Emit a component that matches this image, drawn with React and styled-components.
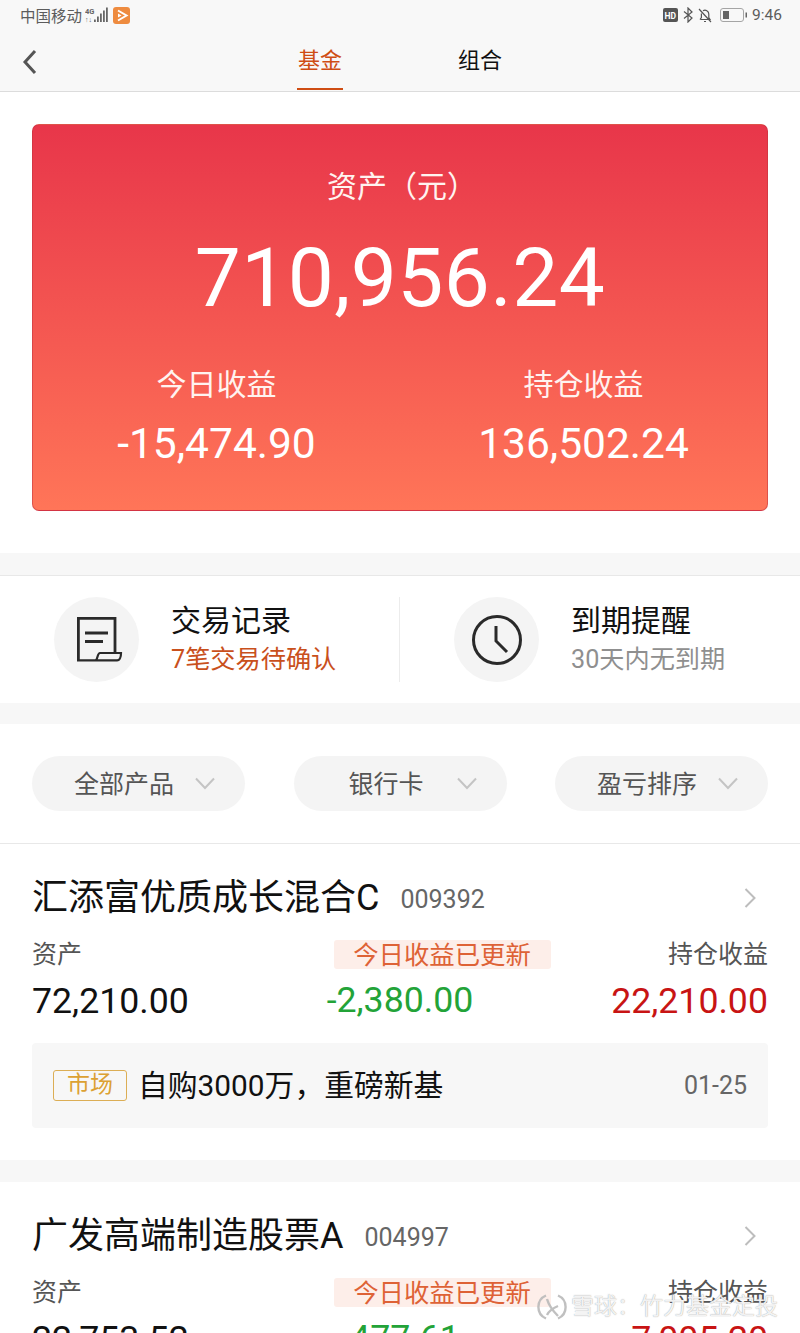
import React from "react";
import styled, { createGlobalStyle } from "styled-components";

const Global = createGlobalStyle`
  html, body { margin: 0; padding: 0; background: #fff; }
  body { font-family: Roboto, "Noto Sans CJK SC", sans-serif; height: 1333px; overflow: hidden; }
  * { box-sizing: border-box; }
`;

const Page = styled.div`
  position: relative;
  width: 800px;
  height: 1333px;
  overflow: hidden;
  background: #fff;
`;
const StatusBar = styled.div`
  height: 32px;
  background: #f8f8f8;
  padding: 0 18px 2px 20px;
  display: flex;
  align-items: center;
  justify-content: space-between;
  color: #5c5c5c;
  font-size: 15.5px;
`;
const StatusGroup = styled.div`
  display: flex;
  align-items: center;
  gap: ${(p) => p.$gap || 3}px;
`;
const Nav = styled.div`
  height: 60px;
  background: #f8f8f8;
  border-bottom: 1px solid #dcdcdc;
  position: relative;
  display: flex;
  justify-content: center;
  gap: 114px;
`;
const Back = styled.svg`
  position: absolute;
  left: 22px;
  top: 17px;
`;
const Tab = styled.div`
  height: 58px;
  width: 46px;
  display: flex;
  justify-content: center;
  padding-top: 11px;
  font-size: 22px;
  line-height: 36px;
  white-space: nowrap;
  color: ${(p) => (p.$active ? "#cf4d14" : "#111")};
  border-bottom: ${(p) => (p.$active ? "2px solid #cf4d14" : "none")};
`;
const HeroWrap = styled.div`
  padding: 32px 32px 42px;
`;
const Hero = styled.div`
  height: 387px;
  border-radius: 7px;
  border: 1px solid rgba(190, 50, 60, 0.5);
  background: linear-gradient(180deg, #e8364a 0%, #ff7558 100%);
  color: #fff;
  display: flex;
  flex-direction: column;
  align-items: center;
  padding-top: 42px;
`;
const HeroLabel = styled.div`
  font-size: 30px;
  line-height: 40px;
  margin-left: 4px;
  color: #fff3f0;
`;
const HeroValue = styled.div`
  font-size: 82px;
  line-height: 96px;
  margin-top: 23px;
  letter-spacing: 0.4px;
`;
const HeroStats = styled.div`
  width: 100%;
  display: grid;
  grid-template-columns: 367px 367px;
  margin-top: 39px;
`;
const HeroStat = styled.div`
  display: flex;
  flex-direction: column;
  align-items: center;
`;
const HeroStatLabel = styled.div`
  font-size: 30px;
  line-height: 40px;
  color: #fff3f0;
`;
const HeroStatValue = styled.div`
  font-size: 42.5px;
  line-height: 50px;
  margin-top: 14px;
`;
const Band = styled.div`
  height: ${(p) => p.$h}px;
  background: #f7f7f7;
  border-bottom: ${(p) => (p.$line ? "1px solid #e8e8e8" : "none")};
`;
const Shortcuts = styled.div`
  height: 127px;
  display: grid;
  grid-template-columns: 400px 400px;
  align-items: center;
`;
const Shortcut = styled.div`
  height: 85px;
  padding-left: 54px;
  display: flex;
  align-items: center;
  gap: 32px;
  border-right: ${(p) => (p.$divider ? "1px solid #ececec" : "none")};
`;
const IconCircle = styled.div`
  width: 85px;
  height: 85px;
  border-radius: 50%;
  background: #f4f4f4;
  display: flex;
  align-items: center;
  justify-content: center;
  flex: none;
`;
const ShortcutText = styled.div`
  display: flex;
  flex-direction: column;
  padding-top: 3px;
`;
const ShortcutTitle = styled.div`
  font-size: 30px;
  line-height: 36px;
  margin-top: -3px;
  color: #111;
`;
const ShortcutSub = styled.div`
  font-size: 25.2px;
  line-height: 34px;
  margin-top: 4px;
  color: ${(p) => (p.$accent ? "#c9501c" : "#8f8f8f")};
`;
const Filters = styled.div`
  height: 120px;
  padding: 32px 32px 0;
  display: flex;
  justify-content: space-between;
  border-bottom: 1px solid #e8e8e8;
`;
const Pill = styled.div`
  width: 213px;
  height: 55px;
  border-radius: 28px;
  background: #f4f4f4;
  display: flex;
  align-items: center;
  justify-content: space-between;
  padding: 0 30px 0 ${(p) => p.$left}px;
  font-size: 25px;
  line-height: 50px;
  color: #555;
`;
const PillText = styled.span`
  display: block;
  height: 47px;
`;
const Fund = styled.div`
  height: ${(p) => p.$h}px;
  padding: 30px 32px 0;
`;
const FundHead = styled.div`
  display: flex;
  align-items: center;
  height: 48px;
`;
const FundName = styled.div`
  font-size: 36px;
  line-height: 48px;
  color: #111;
  white-space: nowrap;
`;
const FundCode = styled.div`
  font-size: 25px;
  color: #666;
  margin-left: 21px;
  flex: 1;
  padding-top: 3px;
`;
const Chevron = styled.svg`
  flex: none;
  margin-right: 12px;
`;
const Metrics = styled.div`
  display: grid;
  grid-template-columns: 1fr 1fr 1fr;
  margin-top: 18px;
`;
const Metric = styled.div`
  display: flex;
  flex-direction: column;
  align-items: ${(p) => p.$align};
`;
const MetricLabel = styled.div`
  font-size: 25px;
  line-height: 30px;
  height: 30px;
  color: #555;
`;
const UpdatedBadge = styled.div`
  flex: none;
  width: 217px;
  height: 29px;
  margin-left: 84px;
  border-radius: 3px;
  background: #fdeee9;
  color: #de6236;
  font-size: 25.400px;
  line-height: 30px;
  text-align: center;
  white-space: nowrap;
`;
const MetricValue = styled.div`
  font-size: 35.7px;
  line-height: 42px;
  margin-top: 10px;
  color: ${(p) => p.$color};
`;
const News = styled.div`
  height: 85px;
  margin-top: 21px;
  border-radius: 4px;
  background: #f7f7f7;
  padding: 0 21px;
  display: flex;
  align-items: center;
`;
const NewsTag = styled.div`
  width: 74px;
  height: 31px;
  border: 1px solid #dcae55;
  border-radius: 3px;
  color: #dca133;
  font-size: 23px;
  line-height: 28px;
  text-align: center;
`;
const NewsText = styled.div`
  font-size: 29.8px;
  line-height: 40px;
  margin-left: 11px;
  flex: 1;
  color: #111;
`;
const NewsDate = styled.div`
  font-size: 25px;
  color: #666;
`;
const Watermark = styled.div`
  position: absolute;
  right: 22px;
  top: 1292px;
  display: flex;
  align-items: center;
  gap: 4px;
  font-size: 23px;
  line-height: 30px;
  color: rgba(255, 255, 255, 0.88);
  text-shadow: 0 0 1px rgba(110, 110, 110, 0.75);
  white-space: nowrap;
`;

const Caret = () => (
  <svg width="20" height="13" viewBox="0 0 20 13" fill="none">
    <path d="M1 1.5 10 11 19 1.5" stroke="#c4c4c4" strokeWidth="2" />
  </svg>
);
const RightChevron = () => (
  <Chevron width="12" height="20" viewBox="0 0 12 20" fill="none">
    <path d="M1.5 1 10.5 10 1.5 19" stroke="#bdbdbd" strokeWidth="2" />
  </Chevron>
);
const FundCard = ({ h, name, code, asset, day, dayColor, hold, holdColor, news }) => (
  <Fund $h={h}>
    <FundHead>
      <FundName>{name}</FundName>
      <FundCode>{code}</FundCode>
      <RightChevron />
    </FundHead>
    <Metrics>
      <Metric $align="flex-start">
        <MetricLabel>资产</MetricLabel>
        <MetricValue $color="#111">{asset}</MetricValue>
      </Metric>
      <Metric $align="center">
        <UpdatedBadge>今日收益已更新</UpdatedBadge>
        <MetricValue $color={dayColor}>{day}</MetricValue>
      </Metric>
      <Metric $align="flex-end">
        <MetricLabel>持仓收益</MetricLabel>
        <MetricValue $color={holdColor}>{hold}</MetricValue>
      </Metric>
    </Metrics>
    {news && (
      <News>
        <NewsTag>市场</NewsTag>
        <NewsText>{news}</NewsText>
        <NewsDate>01-25</NewsDate>
      </News>
    )}
  </Fund>
);

export default function App() {
  return (
    <Page>
      <Global />
      <StatusBar>
        <StatusGroup>
          <span>中国移动</span>
          <svg width="24" height="16" viewBox="0 0 24 16" fill="#666">
            <text x="0" y="6.500" fontSize="7.500" fontWeight="700" fontFamily="Roboto">4G</text>
            <text x="0" y="15" fontSize="7" fontWeight="700" fontFamily="Roboto">↑↓</text>
            <rect x="9" y="12.500" width="1.800" height="2.500" />
            <rect x="12" y="9.500" width="1.800" height="5.500" />
            <rect x="15" y="6.500" width="1.800" height="8.500" />
            <rect x="18" y="3.500" width="1.800" height="11.500" />
            <rect x="21" y="0.500" width="1.800" height="14.500" />
          </svg>
          <svg width="17" height="17" viewBox="0 0 17 17" style={{ marginLeft: 1 }}>
            <rect width="17" height="17" rx="3" fill="#ee8b3f" />
            <path d="M5 3.500 13.500 8.500 5 13.500" fill="none" stroke="#fff" strokeWidth="2" />
            <path d="M5 6.500 8.500 8.500 5 10.500Z" fill="#fff" />
          </svg>
        </StatusGroup>
        <StatusGroup $gap={5}>
          <svg width="15" height="14" viewBox="0 0 15 14">
            <rect width="15" height="14" rx="2" fill="#555" />
            <text x="1.500" y="10.500" fontSize="8.500" fontWeight="700" fill="#fff" fontFamily="Roboto">HD</text>
          </svg>
          <svg width="10" height="16" viewBox="0 0 10 16" fill="none" stroke="#555" strokeWidth="1.200">
            <path d="M1 4.500 9 11 5 15V1l4 4-8 6.500" />
          </svg>
          <svg width="14" height="15" viewBox="0 0 14 15" fill="none" stroke="#555" strokeWidth="1.200" style={{ marginRight: 3 }}>
            <path d="M2.500 11.500h9.500L10.800 9.500V6A3.800 3.800 0 0 0 5 2.800M3.400 5.500v4L2 11.500M1 1l12 13M6 13.500h2" />
          </svg>
          <svg width="27" height="14" viewBox="0 0 27 14" fill="none">
            <rect x="0.500" y="0.500" width="23" height="13" rx="2.500" stroke="#a5a5a5" />
            <rect x="3" y="3" width="6" height="8" fill="#666" />
            <rect x="25.500" y="4.500" width="1.500" height="5" fill="#666" />
          </svg>
          <span>9:46</span>
        </StatusGroup>
      </StatusBar>
      <Nav>
        <Back width="16" height="26" viewBox="0 0 16 26" fill="none">
          <path d="M13 2 3 13 13 24" stroke="#555" strokeWidth="3" />
        </Back>
        <Tab $active>基金</Tab>
        <Tab>组合</Tab>
      </Nav>
      <HeroWrap>
        <Hero>
          <HeroLabel>资产（元）</HeroLabel>
          <HeroValue>710,956.24</HeroValue>
          <HeroStats>
            <HeroStat>
              <HeroStatLabel>今日收益</HeroStatLabel>
              <HeroStatValue>-15,474.90</HeroStatValue>
            </HeroStat>
            <HeroStat>
              <HeroStatLabel>持仓收益</HeroStatLabel>
              <HeroStatValue>136,502.24</HeroStatValue>
            </HeroStat>
          </HeroStats>
        </Hero>
      </HeroWrap>
      <Band $h={23} $line />
      <Shortcuts>
        <Shortcut $divider>
          <IconCircle>
            <svg width="85" height="85" viewBox="0 0 85 85" fill="none" stroke="#2a2a2a" strokeWidth="2.800">
              <path d="M24.400 63V21.400H61V56" />
              <path d="M23 63.400H41c3 0 2-7.400 5-7.400h21c0 3-1 7.400-4 7.400H41" strokeWidth="2.200" />
              <path d="M31 36h23M31 44.500h18" />
            </svg>
          </IconCircle>
          <ShortcutText>
            <ShortcutTitle>交易记录</ShortcutTitle>
            <ShortcutSub $accent>7笔交易待确认</ShortcutSub>
          </ShortcutText>
        </Shortcut>
        <Shortcut>
          <IconCircle>
            <svg width="52" height="52" viewBox="0 0 52 52" fill="none" stroke="#2a2a2a" strokeWidth="3">
              <circle cx="26" cy="26" r="23.500" />
              <path d="M25 12v15l11 11" />
            </svg>
          </IconCircle>
          <ShortcutText>
            <ShortcutTitle>到期提醒</ShortcutTitle>
            <ShortcutSub>30天内无到期</ShortcutSub>
          </ShortcutText>
        </Shortcut>
      </Shortcuts>
      <Band $h={21} />
      <Filters>
        <Pill $left={42}><PillText>全部产品</PillText><Caret /></Pill>
        <Pill $left={55}><PillText>银行卡</PillText><Caret /></Pill>
        <Pill $left={42}><PillText>盈亏排序</PillText><Caret /></Pill>
      </Filters>
      <FundCard
        h={316}
        name="汇添富优质成长混合C"
        code="009392"
        asset="72,210.00"
        day="-2,380.00"
        dayColor="#23a338"
        hold="22,210.00"
        holdColor="#c81414"
        news="自购3000万，重磅新基"
      />
      <Band $h={22} />
      <FundCard
        h={160}
        name="广发高端制造股票A"
        code="004997"
        asset="22,753.52"
        day="-477.61"
        dayColor="#23a338"
        hold="7,005.20"
        holdColor="#c81414"
      />
      <Watermark>
        <svg width="30" height="30" viewBox="0 0 30 30" fill="none" stroke="rgba(185,185,185,.9)" strokeWidth="2.400">
          <path d="M9 3.500A12.500 12.500 0 0 0 9 26.500M21 3.500A12.500 12.500 0 0 1 21 26.500" />
          <path d="M10 7c2 7 6 12 11 17M10 23c2-4 6-7 11-9" />
        </svg>
        雪球：竹力基金定投
      </Watermark>
    </Page>
  );
}
